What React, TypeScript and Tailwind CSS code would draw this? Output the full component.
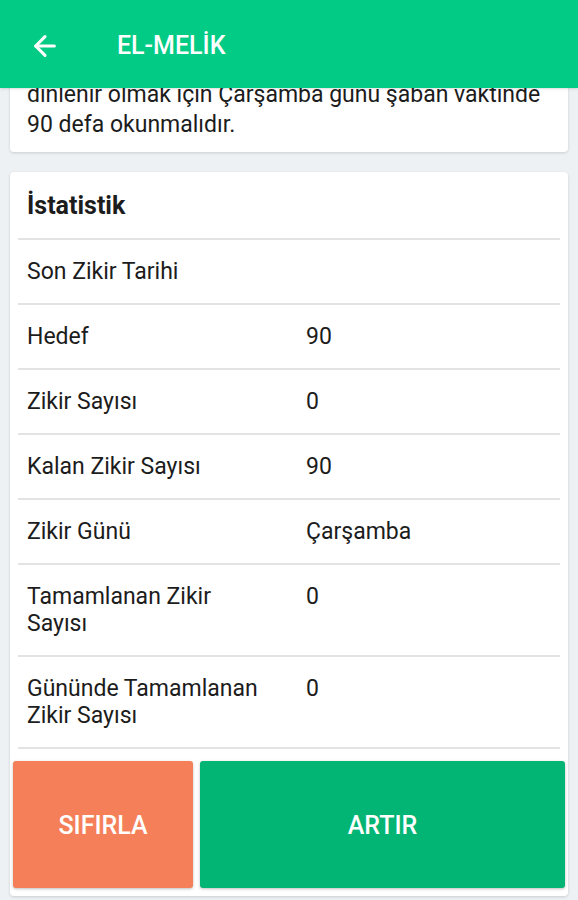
import { ArrowLeft } from 'lucide-react';

export default function App() {
  const rows = [
    { label: 'Son Zikir Tarihi', value: '' },
    { label: 'Hedef', value: '90' },
    { label: 'Zikir Sayısı', value: '0' },
    { label: 'Kalan Zikir Sayısı', value: '90' },
    { label: 'Zikir Günü', value: 'Çarşamba' },
    { label: 'Tamamlanan Zikir Sayısı', value: '0' },
    { label: 'Gününde Tamamlanan Zikir Sayısı', value: '0' },
  ];

  return (
    <div
      className="h-[900px] overflow-hidden bg-[#eef1f4] text-[#1c1c1c]"
      style={{ fontFamily: 'Roboto, "Noto Sans", sans-serif' }}
    >
      {/* app bar */}
      <header className="relative z-10 h-[88px] pt-[4px] bg-[#02cb85] flex items-center shadow-sm">
        <ArrowLeft className="ml-[29px] w-[32px] h-[32px] text-white" strokeWidth={2.3} />
        <h1 className="ml-[56px] text-white text-[25px] font-medium">EL-MELİK</h1>
      </header>

      <main className="-mt-[18px] px-[10px]">
        <div className="bg-white rounded-sm shadow-[0_1px_3px_rgba(0,0,0,0.15)] pl-[17px] pr-[8px] pt-[10px] pb-[12px] text-[23px] leading-[30px]">
          <div className="whitespace-nowrap">dinlenir olmak için Çarşamba günü şaban vaktinde</div>
          <div>90 defa okunmalıdır.</div>
        </div>

        <div className="mt-5 bg-white rounded-sm shadow-[0_1px_3px_rgba(0,0,0,0.15)] pb-2">
          <div className="h-[66px] flex items-center px-[17px] pt-[2px]">
            <h2 className="text-[25px] font-bold">İstatistik</h2>
          </div>
          <div className="mx-2">
            {rows.map((row, i) => (
              <div
                key={i}
                className="flex border-t-2 border-[#e3e3e3] pt-[18px] pb-[18px] text-[23px] leading-[27px]"
              >
                <div className="w-[288px] shrink-0 pl-[9px] pr-[39px]">{row.label}</div>
                <div>{row.value}</div>
              </div>
            ))}
            <div className="border-t-2 border-[#e3e3e3]" />
          </div>

          <div className="mt-[12px] px-[3px] flex gap-[7px]">
            <button className="w-[180px] h-[127px] pt-[2px] rounded-[3px] bg-[#f57f59] text-white text-[25px] font-medium shadow-[0_1px_3px_rgba(0,0,0,0.25)]">
              SIFIRLA
            </button>
            <button className="flex-1 h-[127px] pt-[2px] rounded-[3px] bg-[#03b574] text-white text-[25px] font-medium shadow-[0_1px_3px_rgba(0,0,0,0.25)]">
              ARTIR
            </button>
          </div>
        </div>
      </main>
    </div>
  );
}
